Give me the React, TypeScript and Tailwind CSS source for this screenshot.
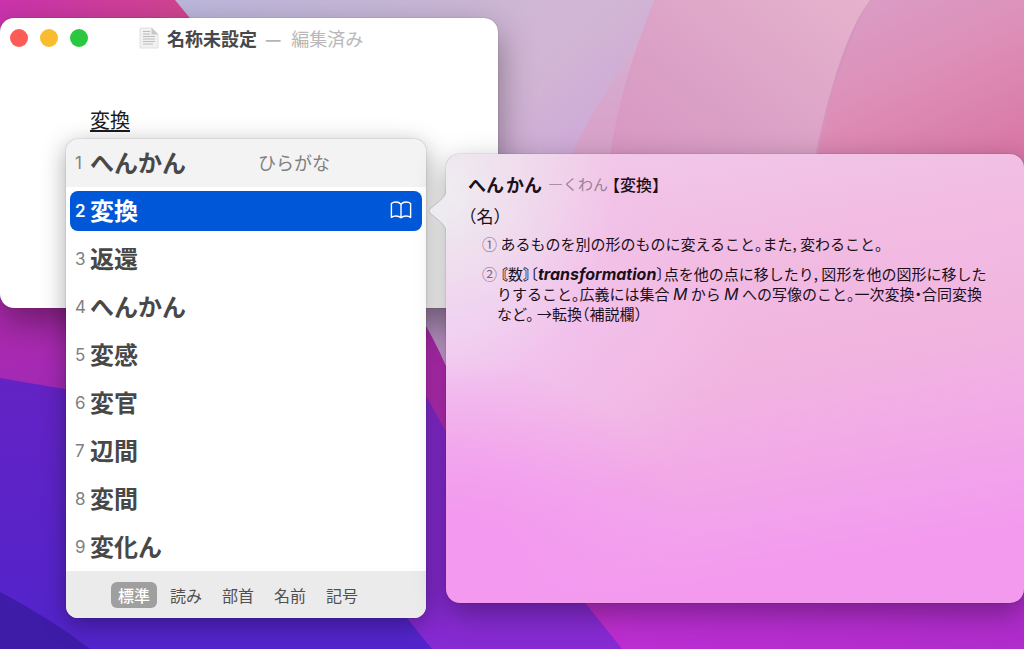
import { useState } from 'react'

const candidates = [
  { text: 'へんかん', note: 'ひらがな' },
  { text: '変換', dictionary: true },
  { text: '返還' },
  { text: 'へんかん' },
  { text: '変感' },
  { text: '変官' },
  { text: '辺間' },
  { text: '変間' },
  { text: '変化ん' },
]

const tabs = ['標準', '読み', '部首', '名前', '記号']

function Wallpaper() {
  return (
    <svg
      className="absolute inset-0 h-full w-full"
      viewBox="0 0 1024 649"
      preserveAspectRatio="none"
      aria-hidden="true"
    >
      <defs>
        <linearGradient id="lilac" x1="0" y1="0" x2="1" y2="1">
          <stop offset="0" stopColor="#bcb8dc" />
          <stop offset="0.45" stopColor="#d2b6d4" />
          <stop offset="0.7" stopColor="#cda4da" />
        </linearGradient>
        <linearGradient id="sliver" x1="0" y1="0" x2="0" y2="1">
          <stop offset="0" stopColor="#d4b2d2" />
          <stop offset="0.7" stopColor="#d8a3cb" />
        </linearGradient>
        <linearGradient id="pink" x1="0" y1="1" x2="1" y2="0">
          <stop offset="0" stopColor="#d693bf" />
          <stop offset="0.45" stopColor="#dba0c6" />
          <stop offset="1" stopColor="#e5b3cd" />
        </linearGradient>
        <linearGradient id="rose" x1="0" y1="0" x2="0.5" y2="1">
          <stop offset="0" stopColor="#d9a0c8" />
          <stop offset="0.5" stopColor="#dd8fb8" />
          <stop offset="1" stopColor="#d977a6" />
        </linearGradient>
        <linearGradient id="magenta" x1="0" y1="0" x2="1" y2="0">
          <stop offset="0" stopColor="#cb33ad" />
          <stop offset="0.35" stopColor="#d2468f" />
          <stop offset="0.75" stopColor="#b82cb8" />
        </linearGradient>
        <linearGradient id="plum" x1="0" y1="0" x2="0" y2="1">
          <stop offset="0" stopColor="#c42ea8" />
          <stop offset="0.4" stopColor="#a329b4" />
          <stop offset="1" stopColor="#8f26c6" />
        </linearGradient>
        <linearGradient id="violet" x1="0" y1="0" x2="0" y2="1">
          <stop offset="0" stopColor="#6423c4" />
          <stop offset="1" stopColor="#5224cc" />
        </linearGradient>
        <linearGradient id="orchid" x1="0" y1="0" x2="1" y2="0">
          <stop offset="0" stopColor="#c42cc4" />
          <stop offset="0.25" stopColor="#ba2ed2" />
          <stop offset="1" stopColor="#b02ccc" />
        </linearGradient>
      </defs>
      <rect width="1024" height="649" fill="#d693bf" />
      <path d="M175 0H655C625 70 612 150 600 400H430C330 260 250 90 175 0Z" fill="url(#lilac)" />
      <path d="M642 30C612 86 585 120 570 160H614C618 110 628 70 642 30Z" fill="url(#sliver)" />
      <path d="M655 0H870C840 40 822 120 806 200H604C612 130 625 70 655 0Z" fill="url(#pink)" />
      <path d="M870 0C855 24 844 60 832 94L806 200H1024V0Z" fill="url(#rose)" />
      <path d="M0 0H175C290 140 400 260 446 366L560 649H0Z" fill="url(#magenta)" />
      <path d="M0 200H200V649H0Z" fill="url(#plum)" />
      <path d="M520 540H1024V649H520Z" fill="url(#orchid)" />
      <path d="M400 340C420 390 430 400 450 440L585 603L622 649H400Z" fill="#862ad2" />
      <path d="M585 603L622 649L584 603Z" fill="#862ad2" />
      <path d="M0 378L200 412C290 470 360 560 432 649H0Z" fill="url(#violet)" />
      <path d="M0 592Q50 618 90 649H0Z" fill="#3f1ca8" />
    </svg>
  )
}

function DocumentIcon() {
  return (
    <svg className="h-6 w-5" viewBox="0 0 20 24" aria-hidden="true">
      <path d="M1 2H13L19 8V22H1Z" fill="#f1f1f1" stroke="#e0e0e0" />
      <path d="M12.5 2V8.5H19Z" fill="#c8c8c8" />
      <path
        d="M4 5.5H11M4 8H11M4 10.5H16M4 13H16M4 15.5H16M4 18H14"
        stroke="#bcbcbc"
        strokeWidth="1.2"
      />
    </svg>
  )
}

function BookIcon() {
  return (
    <svg
      className="h-5 w-[22px]"
      viewBox="0 0 22 20"
      fill="none"
      stroke="#ffffff"
      strokeWidth="1.4"
      strokeLinejoin="round"
      aria-hidden="true"
    >
      <path d="M11 4.2C9.6 2.6 7.8 2 5.8 2S2.4 2.5 1.4 3.4V17.4C2.6 16.5 4.2 16 5.9 16S9.6 16.5 11 17.8C12.4 16.5 14.4 16 16.1 16S19.4 16.5 20.6 17.4V3.4C19.6 2.5 18.2 2 16.2 2S12.4 2.6 11 4.2ZM11 4.2V17.8" />
    </svg>
  )
}

function EditorWindow() {
  return (
    <section
      className="absolute left-0 top-[18px] flex min-h-[290px] w-[498px] flex-col rounded-[14px] bg-white shadow-[0_0_1px_rgba(0,0,0,0.5),0_14px_36px_rgba(0,0,0,0.4)]"
      aria-label="名称未設定"
    >
      <header className="flex h-10 items-center pl-2.5 text-lg">
        <div className="flex gap-3">
          <button className="size-[18px] rounded-full bg-[#fc5b57]" aria-label="閉じる" />
          <button className="size-[18px] rounded-full bg-[#f9bc2e]" aria-label="しまう" />
          <button className="size-[18px] rounded-full bg-[#2ac840]" aria-label="拡大" />
        </div>
        <div className="ml-[51px] flex items-center">
          <DocumentIcon />
          <h1 className="ml-2 font-bold text-[#484848]">名称未設定</h1>
          <span className="ml-2 font-bold text-[#b4b4b4]">—</span>
          <span className="ml-2.5 text-[#b8b8b8]">編集済み</span>
        </div>
      </header>
      <textarea
        className="ml-[90px] mt-11 h-9 resize-none bg-transparent text-xl leading-9 text-[#1c1c1c] underline decoration-2 underline-offset-2 outline-none"
        defaultValue="変換"
        spellCheck={false}
        aria-label="本文"
      />
    </section>
  )
}

function CandidateWindow() {
  const [selected, setSelected] = useState(1)
  const [tab, setTab] = useState(0)

  return (
    <section
      className="absolute left-[66px] top-[139px] w-[360px] overflow-hidden rounded-xl bg-white shadow-[0_0_1px_rgba(0,0,0,0.6),0_6px_24px_rgba(0,0,0,0.35)]"
      aria-label="変換候補"
    >
      <ol>
        {candidates.map((item, i) => (
          <li key={i} className={i === 0 ? 'bg-[#f3f3f3] px-1 py-1' : 'px-1 py-1'}>
            <button
              onClick={() => setSelected(i)}
              className={
                i === selected
                  ? 'flex h-10 w-full items-center rounded-lg bg-[#0058d8] pb-0.5 pl-[5px] pr-2.5 text-left text-white'
                  : 'flex h-10 w-full items-center rounded-lg pb-0.5 pl-[5px] pr-2.5 text-left text-[#484848]'
              }
            >
              <span
                className={
                  i === selected
                    ? 'w-[15px] pt-1 font-[Inter] text-[17px] font-semibold'
                    : 'w-[15px] pt-1 font-[Inter] text-[17px] text-[#808080]'
                }
              >
                {i + 1}
              </span>
              <span className="text-2xl font-bold">{item.text}</span>
              {item.note && <span className="ml-[72px] text-lg text-[#808080]">{item.note}</span>}
              {item.dictionary && (
                <span className="ml-auto">
                  <BookIcon />
                </span>
              )}
            </button>
          </li>
        ))}
      </ol>
      <div className="flex h-[47px] items-center gap-1.5 bg-[#ebebeb] pl-[45px]">
        {tabs.map((label, i) => (
          <button
            key={label}
            onClick={() => setTab(i)}
            className={
              i === tab
                ? 'h-[26px] w-[46px] rounded-md bg-[#9f9f9f] text-base font-medium leading-6 text-white'
                : 'h-[26px] w-[46px] rounded-md text-base leading-6 text-[#505050]'
            }
          >
            {label}
          </button>
        ))}
      </div>
    </section>
  )
}

function DictionaryPopover() {
  return (
    <section
      className="absolute left-[446px] right-0 top-[154px] min-h-[449px] rounded-[14px] bg-[radial-gradient(ellipse_170px_200px_at_0%_8%,#eeedf0_0%,#eeedf000_100%),radial-gradient(ellipse_260px_220px_at_0%_95%,#f39af0_30%,#f39af000_100%),radial-gradient(ellipse_300px_190px_at_0%_40%,#f2c6f2_0%,#f2c6f200_100%),linear-gradient(170deg,#f1caea_0%,#f2bce2_26%,#f1b4e0_50%,#f2a8e8_68%,#f39aef_86%)] pb-8 pl-[22px] pr-8 pt-[18px] text-[#1a0f1a] shadow-[0_0_1px_rgba(0,0,0,0.6),0_10px_30px_rgba(0,0,0,0.35)] [font-feature-settings:'halt']"
      aria-label="辞書"
    >
      {/* Pointer towards the selected candidate */}
      <svg
        className="absolute -left-[18px] top-[34px] h-[46px] w-[19px]"
        viewBox="0 0 19 46"
        aria-hidden="true"
      >
        <path
          d="M18.5 0C18 8 14 11 9 15L2 21Q0 23 2 25L9 31C14 35 18 38 18.5 46"
          fill="#eeebf0"
          stroke="#b8b4b8"
          strokeWidth="0.8"
        />
        <path d="M18 0H19V46H18Z" fill="#eeebf0" />
      </svg>

      <h2 className="flex items-center text-base leading-6">
        <span className="text-lg font-bold leading-6">へん</span>
        <span className="ml-0.5 text-lg font-bold leading-6">かん</span>
        <span className="ml-1.5 text-[15px] text-[#9c7f9c]">—くわん</span>
        <span className="ml-1 font-medium">【変換】</span>
      </h2>
      <p className="mt-2 text-[17px] leading-6">（名）</p>
      <ol className="mt-1.5 flex flex-col gap-2.5 pl-3.5 text-[15px] leading-5">
        <li className="pl-[15px] -indent-[15px]">
          <span className="text-[#7d667d]">①</span> あるものを別の形のものに変えること。また, 変わること。
        </li>
        <li className="whitespace-nowrap pl-[15px] -indent-[15px]">
          <span className="text-[#7d667d]">②</span> <b>〘</b>数<b>〙</b>〔
          <b className="font-[Inter] text-base italic leading-5">transformation</b>
          〕点を他の点に移したり, 図形を他の図形に移した
          <br />
          りすること。広義には集合 <i className="font-[Inter] text-base leading-5">M</i> から{' '}
          <i className="font-[Inter] text-base leading-5">M</i> への写像のこと。一次変換・合同変換
          <br />
          など。 →転換（補説欄）
        </li>
      </ol>
    </section>
  )
}

export default function App() {
  return (
    <main
      lang="ja"
      className="relative h-screen min-h-[640px] overflow-hidden font-['Noto_Sans_CJK_JP',sans-serif]"
    >
      <Wallpaper />
      <EditorWindow />
      <CandidateWindow />
      <DictionaryPopover />
    </main>
  )
}
